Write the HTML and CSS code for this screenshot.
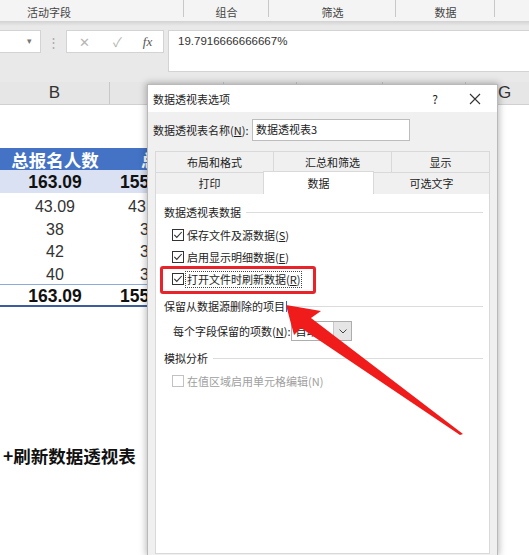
FILE: index.html
```html
<!DOCTYPE html>
<html lang="zh">
<head>
<meta charset="utf-8">
<title>数据透视表选项</title>
<link rel="stylesheet" href="styles.css">
</head>
<body>
<div class="ribbon">
  <div class="grp g1">活动字段</div>
  <div class="grp g2">组合</div>
  <div class="grp g3">筛选</div>
  <div class="grp g4">数据</div>
  <div class="grp g5"></div>
</div>
<div class="fbar">
  <div class="namebox"><span class="caret">▾</span></div>
  <div class="dots">⋮</div>
  <div class="fbtns">
    <span class="fb fb-x">✕</span>
    <span class="fb fb-ok">✓</span>
    <span class="fb fb-fx">fx</span>
  </div>
  <div class="finput">19.7916666666667%</div>
</div>
<div class="colhead">
  <div class="ch cb">B</div>
  <div class="ch chc"></div>
  <div class="ch cd"></div>
  <div class="ch ce"></div>
  <div class="ch cf"></div>
  <div class="ch cg">G</div>
</div>
<div class="sheet">
  <div class="blank"></div>
  <div class="row r-head"><div class="cb">总报名人数</div><div class="cc pl31">总</div></div>
  <div class="row r-sum"><div class="cb">163.09</div><div class="cc pl10">155</div></div>
  <div class="row r-data"><div class="cb">43.09</div><div class="cc pl18">43</div></div>
  <div class="row r-data"><div class="cb">38</div><div class="cc pl30">3</div></div>
  <div class="row r-data"><div class="cb">42</div><div class="cc pl30">3</div></div>
  <div class="row r-data"><div class="cb">40</div><div class="cc pl30">3</div></div>
  <div class="row r-total"><div class="cb">163.09</div><div class="cc pl10">155</div></div>
  <div class="note">+刷新数据透视表</div>
</div>

<div class="dialog">
  <div class="titlebar">
    <span class="title">数据透视表选项</span>
    <span class="help">?</span>
    <svg class="close" width="12" height="12" viewBox="0 0 12 12"><path d="M1 1L11 11M11 1L1 11" stroke="#333" stroke-width="1.1" fill="none"/></svg>
  </div>
  <div class="dbody">
    <div class="namerow">
      <span class="lbl">数据透视表名称(<u>N</u>):</span>
      <div class="nameinput">数据透视表3</div>
    </div>
    <div class="tabs">
      <div class="tabrow tr1">
        <div class="tab t11">布局和格式</div>
        <div class="tab t12">汇总和筛选</div>
        <div class="tab t13">显示</div>
      </div>
      <div class="tabrow tr2">
        <div class="tab t21">打印</div>
        <div class="tab t22 sel">数据</div>
        <div class="tab t23">可选文字</div>
      </div>
    </div>
    <div class="panel">
      <div class="sec s1"><span>数据透视表数据</span><i></i></div>
      <div class="chk c1"><span class="box"><svg width="10" height="10" viewBox="0 0 10 10"><path d="M1.3 4.8L3.8 7.4L8.7 2" stroke="#333" stroke-width="1.1" fill="none"/></svg></span><span>保存文件及源数据(<u>S</u>)</span></div>
      <div class="chk"><span class="box"><svg width="10" height="10" viewBox="0 0 10 10"><path d="M1.3 4.8L3.8 7.4L8.7 2" stroke="#333" stroke-width="1.1" fill="none"/></svg></span><span>启用显示明细数据(<u>E</u>)</span></div>
      <div class="chk"><span class="box"><svg width="10" height="10" viewBox="0 0 10 10"><path d="M1.3 4.8L3.8 7.4L8.7 2" stroke="#333" stroke-width="1.1" fill="none"/></svg></span><span class="focus">打开文件时刷新数据(<u>R</u>)</span></div>
      <div class="sec s2"><span>保留从数据源删除的项目</span><b class="caretbar"></b><i></i></div>
      <div class="field">
        <span>每个字段保留的项数(<u>N</u>):</span>
        <div class="select"><span class="sv">自动</span><span class="sbtn"><svg width="8" height="5" viewBox="0 0 8 5"><path d="M0.5 0.5L4 4L7.5 0.5" stroke="#444" stroke-width="1" fill="none"/></svg></span></div>
      </div>
      <div class="sec s3"><span>模拟分析</span><i></i></div>
      <div class="chk dis"><span class="box"></span><span>在值区域启用单元格编辑(N)</span></div>
    </div>
  </div>
</div>

<div class="redbox"></div>
<svg class="arrow" width="529" height="555" viewBox="0 0 529 555">
  <polygon points="286,305 321,311 311,318 463,434 460,435 301,328 294,335" fill="#f01c1c"/>
</svg>
</body>
</html>
```

FILE: styles.css
```css
* { box-sizing: border-box; margin: 0; padding: 0; }
html, body { width: 529px; height: 555px; overflow: hidden; }
body {
  background: #fff;
  position: relative;
  font-family: "Noto Sans CJK SC", "Liberation Sans", sans-serif;
  color: #222;
}
u { text-decoration: underline; text-underline-offset: 1px; }

/* ribbon */
.ribbon { height: 21px; background: #f4f4f4; display: flex; font-size: 11px; color: #444; }
.grp {
  height: 21px; padding-top: 3px; line-height: 18px; text-align: center;
  background: linear-gradient(#c8c8c8, #c8c8c8) right top / 1px 17px no-repeat;
}
.g1 { width: 184px; text-align: left; padding-left: 27px; }
.g2 { width: 85px; }
.g3 { width: 127px; }
.g4 { width: 99px; }
.g5 { flex: 1; background: none; }

/* formula bar */
.fbar {
  height: 61px; display: flex; align-items: flex-start; padding-top: 9px;
  background: linear-gradient(#d2d2d2, #e9e9e9 5px, #e9e9e9);
}
.namebox {
  width: 42px; height: 23px; margin-left: -1px; background: #fff;
  border: 1px solid #d3d3d3; position: relative;
}
.caret { position: absolute; left: 27px; top: 3px; font-size: 9px; color: #777; }
.dots { width: 25px; height: 23px; text-align: center; color: #aaa; font-size: 13px; line-height: 23px; }
.fbtns {
  width: 98px; height: 23px; background: #fff; border: 1px solid #d3d3d3;
  display: flex; align-items: center;
}
.fb { display: block; text-align: center; color: #b5b5b5; font-size: 13px; }
.fb-x { width: 34px; }
.fb-ok { width: 33px; }
.fb-fx { width: 27px; font-family: "Liberation Serif", serif; font-style: italic; color: #555; font-size: 13px; }
.finput {
  flex: 1; height: 42px; margin-left: 4px; background: #fff; border: 1px solid #d3d3d3;
  border-right: none; padding: 4px 9px; font-family: "Liberation Sans", sans-serif;
  font-size: 11.5px; color: #333;
}

/* column header */
.colhead {
  height: 23px; display: flex; background: #e6e6e6;
  font-family: "Liberation Sans", sans-serif; font-size: 17px; color: #333;
  border-bottom: 1px solid #d0d0d0;
}
.ch { border-right: 1px solid #c8c8c8; text-align: center; line-height: 22px; flex: none; }
.cb { width: 110px; flex: none; }
.chc { width: 114px; }
.cd { width: 73px; }
.ce { width: 86px; }
.cf { width: 83px; }
.cg { flex: 1; border-right: none; text-align: left; padding-left: 32px; }

/* sheet */
.sheet { font-family: "Liberation Sans", "Noto Sans CJK SC", sans-serif; color: #222; }
.blank { height: 43px; }
.row { display: flex; width: 466px; align-items: center; }
.row .cb { text-align: center; }
.cc { width: 60px; flex: none; white-space: nowrap; text-align: left; }
.pl31 { padding-left: 31px; }
.pl10 { padding-left: 10px; }
.pl18 { padding-left: 18px; }
.pl30 { padding-left: 30px; }
.r-head { height: 22px; background: #4472c4; color: #fff; font-weight: bold; font-size: 17.5px; font-family: "Noto Sans CJK SC", sans-serif; }
.r-sum { height: 23px; padding-top: 2px; background: #d9e1f2; font-weight: bold; font-size: 17.5px; color: #111; }
.r-data { height: 22.75px; font-size: 16px; padding-top: 5px; color: #333; }
.r-total {
  height: 23px; padding-top: 3px; font-weight: bold; font-size: 17.5px; color: #111;
  border-top: 1px solid #8ea9db; border-bottom: 2px solid #3c5d9c;
}
.note {
  margin-top: 138px; padding-left: 3px; font-weight: bold; font-size: 17.5px;
  font-family: "Noto Sans CJK SC", sans-serif; color: #111; line-height: 22px;
}

/* dialog */
.dialog {
  position: absolute; left: 147px; top: 84px; width: 351px; height: 471px; overflow: hidden;
  background: #f0f0f0; border: 1px solid #b9b9b9; border-bottom: none;
  box-shadow: 0 0 7px 1px rgba(0, 0, 0, 0.28);
  font-size: 11px; color: #222;
}
.titlebar { height: 27px; background: #fff; display: flex; align-items: center; }
.title { padding-left: 5px; flex: 1; }
.help { width: 14px; text-align: center; font-size: 12px; margin-right: 27px; }
.close { margin-right: 16px; }
.dbody { padding-top: 7px; }
.namerow { display: flex; align-items: center; height: 22px; padding-left: 5px; }
.lbl { width: 99px; }
.nameinput {
  width: 158px; height: 22px; background: #fff; border: 1px solid #bdbdbd;
  padding-left: 3px; line-height: 19px;
}
.tabs { margin: 10px 0 0 7px; width: 335px; }
.tabrow { display: flex; }
.tr1 { height: 21px; }
.tr2 { height: 22px; }
.tab {
  background: #f0f0f0; border: 1px solid #d9d9d9; border-bottom: none;
  text-align: center; line-height: 20px; color: #222;
}
.tr1 .tab { border-right: none; }
.tr1 .tab:last-child { border-right: 1px solid #d9d9d9; }
.t11 { width: 118px; }
.t12 { width: 118px; }
.t13 { width: 99px; }
.t21 { width: 108px; border-right: none; }
.t22 { width: 111px; }
.t23 { width: 116px; border-left: none; }
.tab.sel { background: #fff; margin-top: -1px; height: 23px; line-height: 22px; border-color: #d9d9d9; }

.panel {
  width: 335px; height: 360px; margin-left: 7px; background: #fff;
  border: 1px solid #d9d9d9; border-top: none; padding-top: 10px;
}
.sec { display: flex; align-items: center; height: 16px; padding: 0 6px 0 8px; }
.sec i { flex: 1; height: 1px; background: #dcdcdc; margin-left: 5px; }
.s2 { margin-top: 8px; }
.s3 { margin-top: 9px; }
.caretbar { width: 1px; height: 11px; background: #1f6fd0; margin-left: 1px; }
.chk { display: flex; align-items: center; height: 22px; padding-left: 16px; }
.c1 { margin-top: 4px; }
.box {
  width: 12px; height: 12px; border: 1px solid #333; background: #fff;
  display: flex; align-items: center; justify-content: center; margin-right: 3px; flex: none;
}
.focus { border: 1px dotted #444; padding: 0 1px; margin-left: -2px; line-height: 15px; }
.field { display: flex; align-items: center; height: 20px; margin-top: 7px; padding-left: 17px; }
.select {
  width: 61px; height: 20px; margin-left: 1px; border: 1px solid #adadad; background: #fff;
  display: flex;
}
.sv { flex: 1; padding-left: 3px; line-height: 18px; }
.sbtn {
  width: 18px; background: #e5e5e5; border-left: 1px solid #c8c8c8;
  display: flex; align-items: center; justify-content: center;
}
.dis { margin-top: 4px; color: #a0a0a0; }
.dis .box { border-color: #c2c2c2; }

/* overlays */
.redbox {
  position: absolute; left: 160px; top: 266px; width: 156px; height: 28px;
  border: 3px solid #e8242a; border-radius: 3px;
}
.arrow { position: absolute; left: 0; top: 0; pointer-events: none; }
```
